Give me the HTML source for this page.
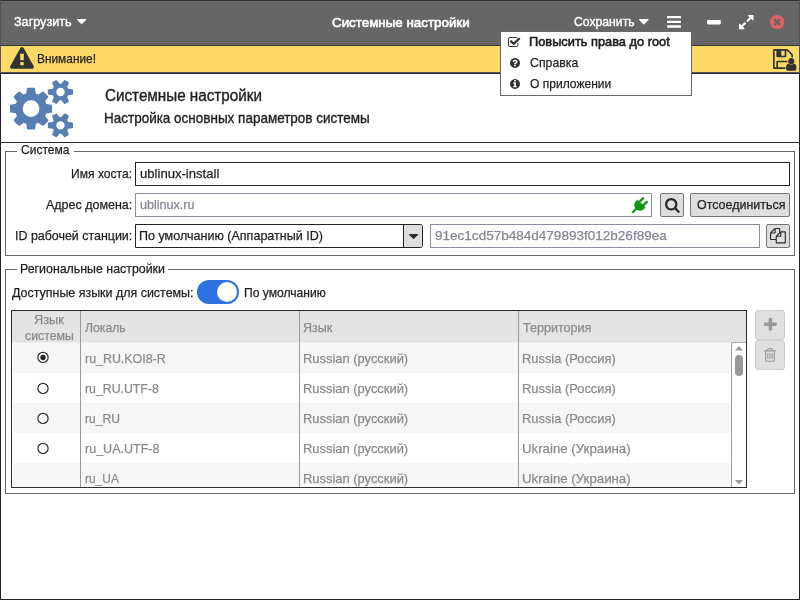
<!DOCTYPE html>
<html lang="ru"><head><meta charset="utf-8"><title>Системные настройки</title>
<style>
html,body{margin:0;padding:0}
body{width:800px;height:600px;position:relative;overflow:hidden;background:#fff;font-family:"Liberation Sans", sans-serif}
.b{position:absolute}
.tx{position:absolute;left:0;top:0;width:800px;height:600px;will-change:opacity;opacity:.999}
.ic{position:absolute;overflow:visible}
.t{position:absolute;white-space:pre;line-height:normal;transform-origin:0 0;-webkit-text-stroke:0.25px currentColor;font-family:"Liberation Sans", sans-serif}
</style></head><body>
<div class="b" style="left:0px;top:0px;width:800px;height:600px;background:#fff"></div>
<div class="b" style="left:0px;top:0px;width:800px;height:45px;background:#666"></div>
<div class="b" style="left:0px;top:45px;width:800px;height:1px;background:#333"></div>
<div class="b" style="left:0px;top:46px;width:800px;height:26px;background:#FFD966"></div>
<div class="b" style="left:0px;top:72px;width:800px;height:1px;background:#50545c"></div>
<div class="b" style="left:0px;top:73px;width:800px;height:1px;background:#2b2b2b"></div>
<div class="b" style="left:0px;top:142px;width:800px;height:1px;background:#2b2b2b"></div>
<div class="b" style="left:0px;top:0px;width:800px;height:1px;background:#333"></div>
<div class="b" style="left:0px;top:0px;width:1px;height:73px;background:#50545c"></div>
<div class="b" style="left:0px;top:73px;width:1px;height:527px;background:#222"></div>
<div class="b" style="left:799px;top:0px;width:1px;height:73px;background:#50545c"></div>
<div class="b" style="left:799px;top:73px;width:1px;height:527px;background:#222"></div>
<div class="b" style="left:0px;top:599px;width:800px;height:1px;background:#222"></div>
<svg class="ic" style="left:77.1px;top:18.9px;width:9.20px;height:5.30px" viewBox="0.0 -896 1024.0 576.0" preserveAspectRatio="none"><path fill="#fff" d="M1005 787 557 339Q538 320 512.0 320.0Q486 320 467 339L19 787Q0 806 0.0 832.0Q0 858 19.0 877.0Q38 896 64 896H960Q986 896 1005.0 877.0Q1024 858 1024.0 832.0Q1024 806 1005 787Z" transform="scale(1,-1)" /></svg>
<svg class="ic" style="left:638.8px;top:18.8px;width:9.70px;height:5.40px" viewBox="0.0 -896 1024.0 576.0" preserveAspectRatio="none"><path fill="#fff" d="M1005 787 557 339Q538 320 512.0 320.0Q486 320 467 339L19 787Q0 806 0.0 832.0Q0 858 19.0 877.0Q38 896 64 896H960Q986 896 1005.0 877.0Q1024 858 1024.0 832.0Q1024 806 1005 787Z" transform="scale(1,-1)" /></svg>
<svg class="ic" style="left:667px;top:15.8px;width:14.00px;height:11.70px" viewBox="0 -1280 1536 1280" preserveAspectRatio="none"><path fill="#fff" d="M1536 192V64Q1536 38 1517.0 19.0Q1498 0 1472 0H64Q38 0 19.0 19.0Q0 38 0 64V192Q0 218 19.0 237.0Q38 256 64 256H1472Q1498 256 1517.0 237.0Q1536 218 1536 192ZM1536 704V576Q1536 550 1517.0 531.0Q1498 512 1472 512H64Q38 512 19.0 531.0Q0 550 0 576V704Q0 730 19.0 749.0Q38 768 64 768H1472Q1498 768 1517.0 749.0Q1536 730 1536 704ZM1536 1216V1088Q1536 1062 1517.0 1043.0Q1498 1024 1472 1024H64Q38 1024 19.0 1043.0Q0 1062 0 1088V1216Q0 1242 19.0 1261.0Q38 1280 64 1280H1472Q1498 1280 1517.0 1261.0Q1536 1242 1536 1216Z" transform="scale(1,-1)" /></svg>
<svg class="ic" style="left:707.2px;top:19.7px;width:13.80px;height:4.40px" viewBox="0 -896 1408 384" preserveAspectRatio="none"><path fill="#fff" d="M1408 800V608Q1408 568 1380.0 540.0Q1352 512 1312 512H96Q56 512 28.0 540.0Q0 568 0 608V800Q0 840 28.0 868.0Q56 896 96 896H1312Q1352 896 1380.0 868.0Q1408 840 1408 800Z" transform="scale(1,-1)" /></svg>
<svg class="ic" style="left:739px;top:14.8px;width:14.50px;height:14.20px" viewBox="0 -1408 1536 1536" preserveAspectRatio="none"><path fill="#fff" d="M745 457 413 125 557 -19Q576 -38 576.0 -64.0Q576 -90 557.0 -109.0Q538 -128 512 -128H64Q38 -128 19.0 -109.0Q0 -90 0 -64V384Q0 410 19.0 429.0Q38 448 64.0 448.0Q90 448 109 429L253 285L585 617Q595 627 608.0 627.0Q621 627 631 617L745 503Q755 493 755.0 480.0Q755 467 745 457ZM1536 1344V896Q1536 870 1517.0 851.0Q1498 832 1472.0 832.0Q1446 832 1427 851L1283 995L951 663Q941 653 928.0 653.0Q915 653 905 663L791 777Q781 787 781.0 800.0Q781 813 791 823L1123 1155L979 1299Q960 1318 960.0 1344.0Q960 1370 979.0 1389.0Q998 1408 1024 1408H1472Q1498 1408 1517.0 1389.0Q1536 1370 1536 1344Z" transform="scale(1,-1)" /></svg>
<svg class="ic" style="left:770px;top:15px;width:14.30px;height:14.20px" viewBox="0.0 -1408.0 1536.0 1536.0" preserveAspectRatio="none"><path fill="#e06363" d="M1149 414Q1149 440 1130 459L949 640L1130 821Q1149 840 1149 866Q1149 893 1130 912L1040 1002Q1021 1021 994 1021Q968 1021 949 1002L768 821L587 1002Q568 1021 542 1021Q515 1021 496 1002L406 912Q387 893 387 866Q387 840 406 821L587 640L406 459Q387 440 387 414Q387 387 406 368L496 278Q515 259 542 259Q568 259 587 278L768 459L949 278Q968 259 994 259Q1021 259 1040 278L1130 368Q1149 387 1149 414ZM1433.0 1025.5Q1536 849 1536.0 640.0Q1536 431 1433.0 254.5Q1330 78 1153.5 -25.0Q977 -128 768.0 -128.0Q559 -128 382.5 -25.0Q206 78 103.0 254.5Q0 431 0.0 640.0Q0 849 103.0 1025.5Q206 1202 382.5 1305.0Q559 1408 768.0 1408.0Q977 1408 1153.5 1305.0Q1330 1202 1433.0 1025.5Z" transform="scale(1,-1)" /></svg>
<svg class="ic" style="left:10px;top:47.3px;width:24.00px;height:21.70px" viewBox="-1.0138888888888857 -1536.0 1794.0277777777778 1664.0" preserveAspectRatio="none"><path fill="#333" d="M1024 161V351Q1024 365 1014.5 374.5Q1005 384 992 384H800Q787 384 777.5 374.5Q768 365 768 351V161Q768 147 777.5 137.5Q787 128 800 128H992Q1005 128 1014.5 137.5Q1024 147 1024 161ZM1022 535 1040 994Q1040 1006 1030 1013Q1017 1024 1006 1024H786Q775 1024 762 1013Q752 1006 752 992L769 535Q769 525 779.0 518.5Q789 512 803 512H988Q1002 512 1011.5 518.5Q1021 525 1022 535ZM1008 1469 1776 61Q1811 -2 1774 -65Q1757 -94 1727.5 -111.0Q1698 -128 1664 -128H128Q94 -128 64.5 -111.0Q35 -94 18 -65Q-19 -2 16 61L784 1469Q801 1500 831.0 1518.0Q861 1536 896.0 1536.0Q931 1536 961.0 1518.0Q991 1500 1008 1469Z" transform="scale(1,-1)" /></svg>
<svg class="ic" style="left:773px;top:49px;width:20.00px;height:20.00px" viewBox="0 -1408 1536 1536" preserveAspectRatio="none"><path fill="#333" d="M384 0H1152V384H384ZM1280 0H1408V896Q1408 910 1398.0 934.5Q1388 959 1378 969L1097 1250Q1087 1260 1063.0 1270.0Q1039 1280 1024 1280V864Q1024 824 996.0 796.0Q968 768 928 768H352Q312 768 284.0 796.0Q256 824 256 864V1280H128V0H256V416Q256 456 284.0 484.0Q312 512 352 512H1184Q1224 512 1252.0 484.0Q1280 456 1280 416ZM896 928V1248Q896 1261 886.5 1270.5Q877 1280 864 1280H672Q659 1280 649.5 1270.5Q640 1261 640 1248V928Q640 915 649.5 905.5Q659 896 672 896H864Q877 896 886.5 905.5Q896 915 896 928ZM1536 896V-32Q1536 -72 1508.0 -100.0Q1480 -128 1440 -128H96Q56 -128 28.0 -100.0Q0 -72 0 -32V1312Q0 1352 28.0 1380.0Q56 1408 96 1408H1024Q1064 1408 1112.0 1388.0Q1160 1368 1188 1340L1468 1060Q1496 1032 1516.0 984.0Q1536 936 1536 896Z" transform="scale(1,-1)" /></svg>
<svg class="ic" style="left:786px;top:57.8px;width:10.50px;height:12.70px" viewBox="0 -1408.0 1280 1536.0" preserveAspectRatio="none"><path fill="#333" d="M1280 137Q1280 28 1217.5 -50.0Q1155 -128 1067 -128H213Q125 -128 62.5 -50.0Q0 28 0 137Q0 222 8.5 297.5Q17 373 40.0 449.5Q63 526 98.5 580.5Q134 635 192.5 669.5Q251 704 327 704Q458 576 640.0 576.0Q822 576 953 704Q1029 704 1087.5 669.5Q1146 635 1181.5 580.5Q1217 526 1240.0 449.5Q1263 373 1271.5 297.5Q1280 222 1280 137ZM911.5 1295.5Q1024 1183 1024.0 1024.0Q1024 865 911.5 752.5Q799 640 640.0 640.0Q481 640 368.5 752.5Q256 865 256.0 1024.0Q256 1183 368.5 1295.5Q481 1408 640.0 1408.0Q799 1408 911.5 1295.5Z" transform="scale(1,-1)" stroke="#FFD966" stroke-width="170" paint-order="stroke"/></svg>
<div class="b" style="left:500px;top:31px;width:192px;height:65px;background:#fff;border:1px solid #6a6a6a;box-sizing:border-box"></div>
<svg class="ic" style="left:508.4px;top:37px;width:12.30px;height:9.90px" viewBox="0 -1408 1663.0 1408" preserveAspectRatio="none"><path fill="#333" d="M1408 606V288Q1408 169 1323.5 84.5Q1239 0 1120 0H288Q169 0 84.5 84.5Q0 169 0 288V1120Q0 1239 84.5 1323.5Q169 1408 288 1408H1120Q1183 1408 1237 1383Q1252 1376 1255 1360Q1258 1343 1246 1331L1197 1282Q1187 1272 1174 1272Q1171 1272 1165 1274Q1142 1280 1120 1280H288Q222 1280 175.0 1233.0Q128 1186 128 1120V288Q128 222 175.0 175.0Q222 128 288 128H1120Q1186 128 1233.0 175.0Q1280 222 1280 288V542Q1280 555 1289 564L1353 628Q1363 638 1376 638Q1382 638 1388 635Q1408 627 1408 606ZM1639 1095 825 281Q801 257 768.0 257.0Q735 257 711 281L281 711Q257 735 257.0 768.0Q257 801 281 825L391 935Q415 959 448.0 959.0Q481 959 505 935L768 672L1415 1319Q1439 1343 1472.0 1343.0Q1505 1343 1529 1319L1639 1209Q1663 1185 1663.0 1152.0Q1663 1119 1639 1095Z" transform="scale(1,-1)" /></svg>
<svg class="ic" style="left:509.7px;top:58.3px;width:10.00px;height:10.00px" viewBox="0.0 -1408.0 1536.0 1536.0" preserveAspectRatio="none"><path fill="#333" d="M896 160V352Q896 366 887.0 375.0Q878 384 864 384H672Q658 384 649.0 375.0Q640 366 640 352V160Q640 146 649.0 137.0Q658 128 672 128H864Q878 128 887.0 137.0Q896 146 896 160ZM1152 832Q1152 920 1096.5 995.0Q1041 1070 958.0 1111.0Q875 1152 788 1152Q545 1152 417 939Q402 915 425 897L557 797Q564 791 576 791Q592 791 601 803Q654 871 687 895Q721 919 773 919Q821 919 858.5 893.0Q896 867 896 834Q896 796 876.0 773.0Q856 750 808 728Q745 700 692.5 641.5Q640 583 640 516V480Q640 466 649.0 457.0Q658 448 672 448H864Q878 448 887.0 457.0Q896 466 896 480Q896 499 917.5 529.5Q939 560 972 579Q1004 597 1021.0 607.5Q1038 618 1067.0 642.5Q1096 667 1111.5 690.5Q1127 714 1139.5 751.0Q1152 788 1152 832ZM1433.0 1025.5Q1536 849 1536.0 640.0Q1536 431 1433.0 254.5Q1330 78 1153.5 -25.0Q977 -128 768.0 -128.0Q559 -128 382.5 -25.0Q206 78 103.0 254.5Q0 431 0.0 640.0Q0 849 103.0 1025.5Q206 1202 382.5 1305.0Q559 1408 768.0 1408.0Q977 1408 1153.5 1305.0Q1330 1202 1433.0 1025.5Z" transform="scale(1,-1)" /></svg>
<svg class="ic" style="left:509.7px;top:79.3px;width:10.00px;height:10.00px" viewBox="0.0 -1408.0 1536.0 1536.0" preserveAspectRatio="none"><path fill="#333" d="M1024 160V320Q1024 334 1015.0 343.0Q1006 352 992 352H896V864Q896 878 887.0 887.0Q878 896 864 896H544Q530 896 521.0 887.0Q512 878 512 864V704Q512 690 521.0 681.0Q530 672 544 672H640V352H544Q530 352 521.0 343.0Q512 334 512 320V160Q512 146 521.0 137.0Q530 128 544 128H992Q1006 128 1015.0 137.0Q1024 146 1024 160ZM896 1056V1216Q896 1230 887.0 1239.0Q878 1248 864 1248H672Q658 1248 649.0 1239.0Q640 1230 640 1216V1056Q640 1042 649.0 1033.0Q658 1024 672 1024H864Q878 1024 887.0 1033.0Q896 1042 896 1056ZM1433.0 1025.5Q1536 849 1536.0 640.0Q1536 431 1433.0 254.5Q1330 78 1153.5 -25.0Q977 -128 768.0 -128.0Q559 -128 382.5 -25.0Q206 78 103.0 254.5Q0 431 0.0 640.0Q0 849 103.0 1025.5Q206 1202 382.5 1305.0Q559 1408 768.0 1408.0Q977 1408 1153.5 1305.0Q1330 1202 1433.0 1025.5Z" transform="scale(1,-1)" /></svg>
<svg class="ic" style="left:10.2px;top:79.5px;width:63.10px;height:57.40px" viewBox="0 -1520 1920 1761" preserveAspectRatio="none"><path fill="#587fb2" d="M821.0 459.0Q896 534 896.0 640.0Q896 746 821.0 821.0Q746 896 640.0 896.0Q534 896 459.0 821.0Q384 746 384.0 640.0Q384 534 459.0 459.0Q534 384 640.0 384.0Q746 384 821.0 459.0ZM1664 128Q1664 180 1626.0 218.0Q1588 256 1536.0 256.0Q1484 256 1446.0 218.0Q1408 180 1408 128Q1408 75 1445.5 37.5Q1483 0 1536.0 0.0Q1589 0 1626.5 37.5Q1664 75 1664 128ZM1664 1152Q1664 1204 1626.0 1242.0Q1588 1280 1536.0 1280.0Q1484 1280 1446.0 1242.0Q1408 1204 1408 1152Q1408 1099 1445.5 1061.5Q1483 1024 1536.0 1024.0Q1589 1024 1626.5 1061.5Q1664 1099 1664 1152ZM1280 731V546Q1280 536 1273.0 526.5Q1266 517 1257 516L1102 492Q1091 457 1070 416Q1104 368 1160 301Q1167 290 1167 281Q1167 269 1160 262Q1137 232 1077.5 172.5Q1018 113 999 113Q988 113 978 120L863 210Q826 191 786 179Q775 71 763 24Q756 0 733 0H547Q536 0 527.0 7.5Q518 15 517 25L494 178Q460 188 419 209L301 120Q294 113 281 113Q270 113 260 121Q116 254 116 281Q116 290 123 300Q133 314 164.0 353.0Q195 392 211 414Q188 458 176 496L24 520Q14 521 7.0 529.5Q0 538 0 549V734Q0 744 7.0 753.5Q14 763 23 764L178 788Q189 823 210 864Q176 912 120 979Q113 990 113 999Q113 1011 120 1019Q142 1049 202.0 1108.0Q262 1167 281 1167Q292 1167 302 1160L417 1070Q451 1088 494 1102Q505 1210 517 1256Q524 1280 547 1280H733Q744 1280 753.0 1272.5Q762 1265 763 1255L786 1102Q820 1092 861 1071L979 1160Q987 1167 999 1167Q1010 1167 1020 1159Q1164 1026 1164 999Q1164 991 1157 980Q1145 964 1115.0 926.0Q1085 888 1070 866Q1093 818 1104 784L1256 761Q1266 759 1273.0 750.5Q1280 742 1280 731ZM1920 198V58Q1920 42 1771 27Q1759 0 1741 -25Q1792 -138 1792 -163Q1792 -167 1788 -170Q1666 -241 1664 -241Q1656 -241 1618.0 -194.0Q1580 -147 1566 -126Q1546 -128 1536.0 -128.0Q1526 -128 1506 -126Q1492 -147 1454.0 -194.0Q1416 -241 1408 -241Q1406 -241 1284 -170Q1280 -167 1280 -163Q1280 -138 1331 -25Q1313 0 1301 27Q1152 42 1152 58V198Q1152 214 1301 229Q1314 258 1331 281Q1280 394 1280 419Q1280 423 1284 426Q1288 428 1319.0 446.0Q1350 464 1378.0 480.0Q1406 496 1408 496Q1416 496 1454.0 449.5Q1492 403 1506 382Q1526 384 1536.0 384.0Q1546 384 1566 382Q1617 453 1658 494L1664 496Q1668 496 1788 426Q1792 423 1792 419Q1792 394 1741 281Q1758 258 1771 229Q1920 214 1920 198ZM1920 1222V1082Q1920 1066 1771 1051Q1759 1024 1741 999Q1792 886 1792 861Q1792 857 1788 854Q1666 783 1664 783Q1656 783 1618.0 830.0Q1580 877 1566 898Q1546 896 1536.0 896.0Q1526 896 1506 898Q1492 877 1454.0 830.0Q1416 783 1408 783Q1406 783 1284 854Q1280 857 1280 861Q1280 886 1331 999Q1313 1024 1301 1051Q1152 1066 1152 1082V1222Q1152 1238 1301 1253Q1314 1282 1331 1305Q1280 1418 1280 1443Q1280 1447 1284 1450Q1288 1452 1319.0 1470.0Q1350 1488 1378.0 1504.0Q1406 1520 1408 1520Q1416 1520 1454.0 1473.5Q1492 1427 1506 1406Q1526 1408 1536.0 1408.0Q1546 1408 1566 1406Q1617 1477 1658 1518L1664 1520Q1668 1520 1788 1450Q1792 1447 1792 1443Q1792 1418 1741 1305Q1758 1282 1771 1253Q1920 1238 1920 1222Z" transform="scale(1,-1)" /></svg>
<div class="b" style="left:5px;top:151px;width:790px;height:105px;border:1px solid #666;box-sizing:border-box"></div><div class="b" style="left:17px;top:151px;width:57px;height:1px;background:#fff"></div>
<div class="b" style="left:5px;top:269px;width:790px;height:225px;border:1px solid #666;box-sizing:border-box"></div><div class="b" style="left:17px;top:269px;width:151px;height:1px;background:#fff"></div>
<div class="b" style="left:135px;top:162px;width:655px;height:24px;border:1px solid #222;box-sizing:border-box;background:#fff"></div>
<div class="b" style="left:135px;top:193px;width:517px;height:24px;border:1px solid #8e8e9e;box-sizing:border-box;background:#fff"></div>
<div class="b" style="left:135px;top:224px;width:288px;height:24px;border:1px solid #222;box-sizing:border-box;background:#fff;border-radius:0 2.5px 2.5px 0"></div>
<div class="b" style="left:403px;top:225px;width:19px;height:22px;background:#dedede;border-left:1px solid #222;box-sizing:border-box;border-radius:0 1.5px 1.5px 0"></div>
<svg class="ic" style="left:408.8px;top:233.6px;width:9.20px;height:5.00px" viewBox="0.0 -896 1024.0 576.0" preserveAspectRatio="none"><path fill="#2b2b2b" d="M1005 787 557 339Q538 320 512.0 320.0Q486 320 467 339L19 787Q0 806 0.0 832.0Q0 858 19.0 877.0Q38 896 64 896H960Q986 896 1005.0 877.0Q1024 858 1024.0 832.0Q1024 806 1005 787Z" transform="scale(1,-1)" /></svg>
<div class="b" style="left:430px;top:224px;width:330px;height:24px;border:1px solid #8e8e9e;box-sizing:border-box;background:#fff"></div>
<div class="b" style="left:660px;top:193px;width:24px;height:24px;background:#dedede;border:1px solid #777;box-sizing:border-box;border-radius:2px"></div>
<div class="b" style="left:690px;top:193px;width:100px;height:24px;background:#dedede;border:1px solid #777;box-sizing:border-box;border-radius:2px"></div>
<div class="b" style="left:766px;top:224px;width:24px;height:24px;background:#dedede;border:1px solid #777;box-sizing:border-box;border-radius:2px"></div>
<svg class="ic" style="left:632px;top:197px;width:16.00px;height:16.00px" viewBox="0 -1536.0 1792.0 1792.0" preserveAspectRatio="none"><path fill="#109510" d="M1755 1083Q1792 1045 1792.0 992.5Q1792 940 1755 902L1354 502L1504 352L1344 192Q1181 29 954.5 5.5Q728 -18 543 106L181 -256H0V-75L362 287Q238 472 261.5 698.5Q285 925 448 1088L608 1248L758 1098L1158 1499Q1196 1536 1249.0 1536.0Q1302 1536 1339.0 1499.0Q1376 1462 1376.0 1408.5Q1376 1355 1339 1318L939 917L1173 683L1574 1083Q1612 1120 1665.0 1120.0Q1718 1120 1755 1083Z" transform="scale(1,-1)" /></svg>
<svg class="ic" style="left:664.8px;top:198px;width:14.70px;height:14.90px" viewBox="0.0 -1408.0 1664.0 1664.0" preserveAspectRatio="none"><path fill="#2b2b2b" d="M1020.5 387.5Q1152 519 1152.0 704.0Q1152 889 1020.5 1020.5Q889 1152 704.0 1152.0Q519 1152 387.5 1020.5Q256 889 256.0 704.0Q256 519 387.5 387.5Q519 256 704.0 256.0Q889 256 1020.5 387.5ZM1664 -128Q1664 -180 1626.0 -218.0Q1588 -256 1536 -256Q1482 -256 1446 -218L1103 124Q924 0 704 0Q561 0 430.5 55.5Q300 111 205.5 205.5Q111 300 55.5 430.5Q0 561 0.0 704.0Q0 847 55.5 977.5Q111 1108 205.5 1202.5Q300 1297 430.5 1352.5Q561 1408 704.0 1408.0Q847 1408 977.5 1352.5Q1108 1297 1202.5 1202.5Q1297 1108 1352.5 977.5Q1408 847 1408 704Q1408 484 1284 305L1627 -38Q1664 -75 1664 -128Z" transform="scale(1,-1)" /></svg>
<svg class="ic" style="left:770.1px;top:228.4px;width:15.90px;height:15.40px" viewBox="0 -1536 1792 1792" preserveAspectRatio="none"><path fill="#2b2b2b" d="M1696 1152Q1736 1152 1764.0 1124.0Q1792 1096 1792 1056V-160Q1792 -200 1764.0 -228.0Q1736 -256 1696 -256H736Q696 -256 668.0 -228.0Q640 -200 640 -160V128H96Q56 128 28.0 156.0Q0 184 0 224V896Q0 936 20.0 984.0Q40 1032 68 1060L476 1468Q504 1496 552.0 1516.0Q600 1536 640 1536H1056Q1096 1536 1124.0 1508.0Q1152 1480 1152 1440V1112Q1220 1152 1280 1152ZM1152 939 853 640H1152ZM512 1323 213 1024H512ZM708 676 1024 992V1408H640V992Q640 952 612.0 924.0Q584 896 544 896H128V256H640V512Q640 552 660.0 600.0Q680 648 708 676ZM1664 -128V1024H1280V608Q1280 568 1252.0 540.0Q1224 512 1184 512H768V-128Z" transform="scale(1,-1)" /></svg>
<div class="b" style="left:197px;top:280px;width:42px;height:24px;background:#2c72e0;border-radius:12px"></div>
<div class="b" style="left:217px;top:282px;width:20px;height:20px;background:#fff;border-radius:10px"></div>
<div class="b" style="left:11px;top:310px;width:736px;height:178px;border:1px solid #2b2b2b;box-sizing:border-box;background:#fff"></div>
<div class="b" style="left:12px;top:311px;width:734px;height:31px;background:#e4e4e4"></div>
<div class="b" style="left:12px;top:342px;width:734px;height:1px;background:#ededed"></div>
<div class="b" style="left:13px;top:343px;width:717px;height:30px;background:#f6f6f6"></div>
<div class="b" style="left:13px;top:403px;width:717px;height:30px;background:#f6f6f6"></div>
<div class="b" style="left:13px;top:463px;width:717px;height:23px;background:#f6f6f6"></div>
<div class="b" style="left:80px;top:311px;width:1px;height:176px;background:#9a9a9a"></div>
<div class="b" style="left:299px;top:311px;width:1px;height:176px;background:#9a9a9a"></div>
<div class="b" style="left:518px;top:311px;width:1px;height:176px;background:#9a9a9a"></div>
<div class="b" style="left:731px;top:342px;width:1px;height:145px;background:#9a9a9a"></div>
<div class="b" style="left:731px;top:342px;width:15px;height:1px;background:#b0b0b0"></div>
<svg class="ic" style="left:735px;top:345.5px;width:8px;height:4.5px" viewBox="0 0 8 4.5"><path d="M0 4.5L4 0L8 4.5Z" fill="#999"/></svg>
<svg class="ic" style="left:735px;top:480px;width:8px;height:4.5px" viewBox="0 0 8 4.5"><path d="M0 0L4 4.5L8 0Z" fill="#999"/></svg>
<div class="b" style="left:735px;top:354.7px;width:7.7000000000000455px;height:21.100000000000023px;background:#999;border-radius:4px"></div>
<svg class="ic" style="left:30px;top:345px;width:30px;height:120px" viewBox="30 345 30 120"><circle cx="43" cy="357.4" r="5.1" fill="#fff" stroke="#303030" stroke-width="1.2"/><circle cx="43" cy="388.4" r="5.1" fill="#fff" stroke="#303030" stroke-width="1.2"/><circle cx="43" cy="418.4" r="5.1" fill="#fff" stroke="#303030" stroke-width="1.2"/><circle cx="43" cy="448.4" r="5.1" fill="#fff" stroke="#303030" stroke-width="1.2"/><circle cx="43" cy="357.5" r="2.7" fill="#222"/></svg>
<div class="b" style="left:755px;top:310px;width:30px;height:29.5px;background:#e0e0e0;border:1px solid #d0d0d0;box-sizing:border-box;border-radius:3px"></div>
<div class="b" style="left:755px;top:340px;width:30px;height:30px;background:#e0e0e0;border:1px solid #d0d0d0;box-sizing:border-box;border-radius:3px"></div>
<svg class="ic" style="left:763.5px;top:318.3px;width:12.80px;height:12.50px" viewBox="0 -1408 1408 1408" preserveAspectRatio="none"><path fill="#999" d="M1408 800V608Q1408 568 1380.0 540.0Q1352 512 1312 512H896V96Q896 56 868.0 28.0Q840 0 800 0H608Q568 0 540.0 28.0Q512 56 512 96V512H96Q56 512 28.0 540.0Q0 568 0 608V800Q0 840 28.0 868.0Q56 896 96 896H512V1312Q512 1352 540.0 1380.0Q568 1408 608 1408H800Q840 1408 868.0 1380.0Q896 1352 896 1312V896H1312Q1352 896 1380.0 868.0Q1408 840 1408 800Z" transform="scale(1,-1)" /></svg>
<svg class="ic" style="left:764px;top:348px;width:12.00px;height:13.80px" viewBox="0 -1408 1408 1536" preserveAspectRatio="none"><path fill="#999" d="M512 800V224Q512 210 503.0 201.0Q494 192 480 192H416Q402 192 393.0 201.0Q384 210 384 224V800Q384 814 393.0 823.0Q402 832 416 832H480Q494 832 503.0 823.0Q512 814 512 800ZM768 800V224Q768 210 759.0 201.0Q750 192 736 192H672Q658 192 649.0 201.0Q640 210 640 224V800Q640 814 649.0 823.0Q658 832 672 832H736Q750 832 759.0 823.0Q768 814 768 800ZM1024 800V224Q1024 210 1015.0 201.0Q1006 192 992 192H928Q914 192 905.0 201.0Q896 210 896 224V800Q896 814 905.0 823.0Q914 832 928 832H992Q1006 832 1015.0 823.0Q1024 814 1024 800ZM1152 76V1024H256V76Q256 54 263.0 35.5Q270 17 277.5 8.5Q285 0 288 0H1120Q1123 0 1130.5 8.5Q1138 17 1145.0 35.5Q1152 54 1152 76ZM480 1152H928L880 1269Q873 1278 863 1280H546Q536 1278 529 1269ZM1408 1120V1056Q1408 1042 1399.0 1033.0Q1390 1024 1376 1024H1280V76Q1280 -7 1233.0 -67.5Q1186 -128 1120 -128H288Q222 -128 175.0 -69.5Q128 -11 128 72V1024H32Q18 1024 9.0 1033.0Q0 1042 0 1056V1120Q0 1134 9.0 1143.0Q18 1152 32 1152H341L411 1319Q426 1356 465.0 1382.0Q504 1408 544 1408H864Q904 1408 943.0 1382.0Q982 1356 997 1319L1067 1152H1376Q1390 1152 1399.0 1143.0Q1408 1134 1408 1120Z" transform="scale(1,-1)" /></svg>
<div class="tx">
<span class="t" style="left:14.00px;top:14.00px;font-size:13.5px;color:#fff;transform:scaleX(0.9344);-webkit-text-stroke:0.4px #fff">Загрузить</span>
<span class="t" style="left:331.50px;top:15.00px;font-size:13.5px;color:#fff;transform:scaleX(0.9892);-webkit-text-stroke:0.6px #fff">Системные настройки</span>
<span class="t" style="left:574.00px;top:14.00px;font-size:13.5px;color:#fff;transform:scaleX(0.9030);-webkit-text-stroke:0.4px #fff">Сохранить</span>
<span class="t" style="left:528.65px;top:34.00px;font-size:13.5px;color:#1e1e1e;transform:scaleX(0.9486);-webkit-text-stroke:0.6px #1e1e1e">Повысить права до root</span>
<span class="t" style="left:529.50px;top:55.00px;font-size:13.5px;color:#1e1e1e;transform:scaleX(0.9111);-webkit-text-stroke:0.25px #1e1e1e">Справка</span>
<span class="t" style="left:529.50px;top:76.00px;font-size:13.5px;color:#1e1e1e;transform:scaleX(0.8923);-webkit-text-stroke:0.25px #1e1e1e">О приложении</span>
<span class="t" style="left:37.42px;top:51.00px;font-size:13.5px;color:#1e1e1e;transform:scaleX(0.8800);-webkit-text-stroke:0.25px #1e1e1e">Внимание!</span>
<span class="t" style="left:105.00px;top:87.00px;font-size:16px;color:#1e1e1e;transform:scaleX(0.9512);-webkit-text-stroke:0.35px #1e1e1e">Системные настройки</span>
<span class="t" style="left:104.07px;top:110.00px;font-size:14.5px;color:#1e1e1e;transform:scaleX(0.9298);-webkit-text-stroke:0.35px #1e1e1e">Настройка основных параметров системы</span>
<span class="t" style="left:20.60px;top:142.00px;font-size:13.5px;color:#1e1e1e;transform:scaleX(0.8909);-webkit-text-stroke:0.25px #1e1e1e">Система</span>
<span class="t" style="left:71.10px;top:166.00px;font-size:13.5px;color:#1e1e1e;transform:scaleX(0.8955);-webkit-text-stroke:0.25px #1e1e1e">Имя хоста:</span>
<span class="t" style="left:46.00px;top:197.00px;font-size:13.5px;color:#1e1e1e;transform:scaleX(0.9247);-webkit-text-stroke:0.25px #1e1e1e">Адрес домена:</span>
<span class="t" style="left:15.08px;top:228.00px;font-size:13.5px;color:#1e1e1e;transform:scaleX(0.9206);-webkit-text-stroke:0.25px #1e1e1e">ID рабочей станции:</span>
<span class="t" style="left:140.20px;top:166.00px;font-size:13.5px;color:#1e1e1e;transform:scaleX(0.9698);-webkit-text-stroke:0.25px #1e1e1e">ublinux-install</span>
<span class="t" style="left:140.20px;top:197.00px;font-size:13.5px;color:#858595;transform:scaleX(0.9319);-webkit-text-stroke:0.25px #858595">ublinux.ru</span>
<span class="t" style="left:138.57px;top:228.00px;font-size:13.5px;color:#1e1e1e;transform:scaleX(0.9289);-webkit-text-stroke:0.25px #1e1e1e">По умолчанию (Аппаратный ID)</span>
<span class="t" style="left:435.00px;top:228.00px;font-size:13.5px;color:#858595;transform:scaleX(1.0022);-webkit-text-stroke:0.25px #858595">91ec1cd57b484d479893f012b26f89ea</span>
<span class="t" style="left:696.70px;top:197.00px;font-size:13.5px;color:#1e1e1e;transform:scaleX(0.9221);-webkit-text-stroke:0.25px #1e1e1e">Отсоединиться</span>
<span class="t" style="left:19.58px;top:261.00px;font-size:13.5px;color:#1e1e1e;transform:scaleX(0.9166);-webkit-text-stroke:0.25px #1e1e1e">Региональные настройки</span>
<span class="t" style="left:11.80px;top:285.00px;font-size:13.5px;color:#1e1e1e;transform:scaleX(0.9219);-webkit-text-stroke:0.25px #1e1e1e">Доступные языки для системы:</span>
<span class="t" style="left:243.50px;top:285.00px;font-size:13.5px;color:#1e1e1e;transform:scaleX(0.8956);-webkit-text-stroke:0.25px #1e1e1e">По умолчанию</span>
<span class="t" style="left:34.06px;top:312.00px;font-size:13.5px;color:#8a8a8a;transform:scaleX(0.9419);-webkit-text-stroke:0.25px #8a8a8a">Язык</span>
<span class="t" style="left:25.20px;top:328.00px;font-size:13.5px;color:#8a8a8a;transform:scaleX(0.9132);-webkit-text-stroke:0.25px #8a8a8a">системы</span>
<span class="t" style="left:85.00px;top:320.00px;font-size:13.5px;color:#8a8a8a;transform:scaleX(0.9056);-webkit-text-stroke:0.25px #8a8a8a">Локаль</span>
<span class="t" style="left:302.82px;top:320.00px;font-size:13.5px;color:#8a8a8a;transform:scaleX(0.9274);-webkit-text-stroke:0.25px #8a8a8a">Язык</span>
<span class="t" style="left:522.50px;top:320.00px;font-size:13.5px;color:#8a8a8a;transform:scaleX(0.9315);-webkit-text-stroke:0.25px #8a8a8a">Территория</span>
<span class="t" style="left:85.00px;top:351.00px;font-size:13.5px;color:#8a8a8a;transform:scaleX(0.9195);-webkit-text-stroke:0.25px #8a8a8a">ru_RU.KOI8-R</span>
<span class="t" style="left:302.79px;top:351.00px;font-size:13.5px;color:#8a8a8a;transform:scaleX(0.9564);-webkit-text-stroke:0.25px #8a8a8a">Russian (русский)</span>
<span class="t" style="left:521.55px;top:351.00px;font-size:13.5px;color:#8a8a8a;transform:scaleX(0.9536);-webkit-text-stroke:0.25px #8a8a8a">Russia (Россия)</span>
<span class="t" style="left:85.00px;top:381.00px;font-size:13.5px;color:#8a8a8a;transform:scaleX(0.9105);-webkit-text-stroke:0.25px #8a8a8a">ru_RU.UTF-8</span>
<span class="t" style="left:302.79px;top:381.00px;font-size:13.5px;color:#8a8a8a;transform:scaleX(0.9564);-webkit-text-stroke:0.25px #8a8a8a">Russian (русский)</span>
<span class="t" style="left:521.55px;top:381.00px;font-size:13.5px;color:#8a8a8a;transform:scaleX(0.9536);-webkit-text-stroke:0.25px #8a8a8a">Russia (Россия)</span>
<span class="t" style="left:85.00px;top:411.00px;font-size:13.5px;color:#8a8a8a;transform:scaleX(0.8974);-webkit-text-stroke:0.25px #8a8a8a">ru_RU</span>
<span class="t" style="left:302.79px;top:411.00px;font-size:13.5px;color:#8a8a8a;transform:scaleX(0.9564);-webkit-text-stroke:0.25px #8a8a8a">Russian (русский)</span>
<span class="t" style="left:521.55px;top:411.00px;font-size:13.5px;color:#8a8a8a;transform:scaleX(0.9536);-webkit-text-stroke:0.25px #8a8a8a">Russia (Россия)</span>
<span class="t" style="left:85.00px;top:441.00px;font-size:13.5px;color:#8a8a8a;transform:scaleX(0.9281);-webkit-text-stroke:0.25px #8a8a8a">ru_UA.UTF-8</span>
<span class="t" style="left:302.79px;top:441.00px;font-size:13.5px;color:#8a8a8a;transform:scaleX(0.9564);-webkit-text-stroke:0.25px #8a8a8a">Russian (русский)</span>
<span class="t" style="left:521.52px;top:441.00px;font-size:13.5px;color:#8a8a8a;transform:scaleX(0.9817);-webkit-text-stroke:0.25px #8a8a8a">Ukraine (Украина)</span>
<span class="t" style="left:85.00px;top:471.00px;font-size:13.5px;color:#8a8a8a;transform:scaleX(0.8846);-webkit-text-stroke:0.25px #8a8a8a">ru_UA</span>
<span class="t" style="left:302.79px;top:471.00px;font-size:13.5px;color:#8a8a8a;transform:scaleX(0.9564);-webkit-text-stroke:0.25px #8a8a8a">Russian (русский)</span>
<span class="t" style="left:521.52px;top:471.00px;font-size:13.5px;color:#8a8a8a;transform:scaleX(0.9817);-webkit-text-stroke:0.25px #8a8a8a">Ukraine (Украина)</span>
</div>
</body></html>
